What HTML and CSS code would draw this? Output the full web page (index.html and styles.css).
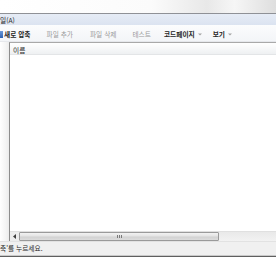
FILE: index.html
```html
<!DOCTYPE html>
<html lang="ko">
<head>
<meta charset="utf-8">
<link rel="stylesheet" href="styles.css">
</head>
<body>
<div class="window">
  <div class="titlebar"></div>
  <div class="menubar"><span class="menu-item">일(A)</span></div>
  <div class="toolbar">
    <span class="tb-icon"></span>
    <span class="tb-item strong">새로 압축</span>
    <span class="tb-item disabled">파일 추가</span>
    <span class="tb-item disabled">파일 삭제</span>
    <span class="tb-item disabled">테스트</span>
    <span class="tb-item strong">코드페이지<svg class="caret" width="4" height="3" viewBox="0 0 4 3"><path d="M0 0.5h4L2 2.5z" fill="#a4a4a4"/></svg></span>
    <span class="tb-item strong">보기<svg class="caret" width="4" height="3" viewBox="0 0 4 3"><path d="M0 0.5h4L2 2.5z" fill="#a4a4a4"/></svg></span>
  </div>
  <div class="main">
    <div class="side"></div>
    <div class="list">
      <div class="list-header"><span class="col">이름</span></div>
      <div class="list-body"></div>
      <div class="hscroll">
        <span class="arrow"><svg width="3" height="5" viewBox="0 0 3 5"><path d="M3 0v5L0 2.5z" fill="#3c3c3c"/></svg></span>
        <div class="thumb"><span class="grip"></span></div>
        <div class="track"></div>
      </div>
    </div>
  </div>
  <div class="statusbar"><span class="status-text">축'를 누르세요.</span></div>
  <div class="frame-bottom"></div>
</div>
</body>
</html>
```
FILE: styles.css
```css
* { box-sizing: border-box; }
html, body {
  margin: 0;
  padding: 0;
  width: 276px;
  height: 260px;
  overflow: hidden;
  background: #ffffff;
  font-family: "Noto Sans CJK KR", "Noto Sans", sans-serif;
  font-size: 6.7px;
  color: #1e1e1e;
}
.window {
  display: flex;
  flex-direction: column;
  height: 260px;
}
.titlebar {
  height: 14px;
  background: linear-gradient(90deg, #ffffff 0%, #fbfbfb 55%, #e8e8e8 75%, #f6f6f6 85%, #dedede 100%);
  border-bottom: 1px solid #8f9196;
}
.menubar {
  height: 11px;
  background: linear-gradient(180deg, #e6ecf6 0%, #dbe3f0 100%);
  display: flex;
  align-items: center;
  padding-top: 1px;
}
.menu-item {
  line-height: 10px;
}
.toolbar {
  height: 17px;
  background: linear-gradient(180deg, #fbfcfd 0%, #f3f5f8 100%);
  display: flex;
  align-items: center;
  padding-top: 2px;
  border-bottom: 1px solid #e6e8ec;
}
.tb-icon {
  width: 3px;
  height: 7px;
  background: linear-gradient(180deg, #6c9ad8, #2f62b4);
  margin-right: 1px;
}
.tb-item {
  line-height: 14px;
  white-space: nowrap;
  display: flex;
  align-items: center;
}
.tb-item.strong { font-weight: 700; color: #262626; }
.tb-item.disabled { color: #9a9a9a; }
.tb-item:nth-child(3) { margin-left: 16px; }
.tb-item:nth-child(4) { margin-left: 17px; }
.tb-item:nth-child(5) { margin-left: 16px; }
.tb-item:nth-child(6) { margin-left: 13px; }
.tb-item:nth-child(7) { margin-left: 11px; }
.caret {
  margin-left: 3px;
  margin-top: 1px;
}
.main {
  flex: 1;
  display: flex;
}
.side {
  width: 9px;
  background: linear-gradient(90deg, #ffffff 0%, #f5f5f5 60%, #ececec 100%);
}
.list {
  flex: 1;
  display: flex;
  flex-direction: column;
  border-left: 1px solid #8d8d8d;
  border-top: 1px solid #a9a9a9;
}
.list-header {
  height: 12px;
  background: linear-gradient(180deg, #ffffff 0%, #f7f8f9 50%, #eef0f2 100%);
  border-bottom: 1px solid #e3e5e7;
  display: flex;
  align-items: center;
  padding-top: 3px;
}
.col {
  padding-left: 3px;
  line-height: 8px;
}
.list-body {
  flex: 1;
  background: #ffffff;
}
.hscroll {
  height: 10px;
  display: flex;
  align-items: stretch;
  background: #ececec;
  border-top: 1px solid #e0e0e0;
}
.arrow {
  width: 9px;
  display: flex;
  align-items: center;
  justify-content: center;
}
.thumb {
  width: 200px;
  border: 1px solid #9a9a9a;
  border-radius: 1px;
  background: linear-gradient(180deg, #f2f2f2 0%, #e4e4e4 45%, #d2d2d2 55%, #dcdcdc 100%);
  display: flex;
  align-items: center;
  justify-content: center;
}
.grip {
  width: 5px;
  height: 3px;
  background: repeating-linear-gradient(90deg, #7a7a7a 0 1px, transparent 1px 2px);
}
.track {
  flex: 1;
  background: linear-gradient(180deg, #e9e9e9, #f2f2f2);
}
.statusbar {
  height: 15px;
  background: #f0f0f0;
  border-top: 1px solid #e2e2e2;
  border-bottom: 1px solid #c9c9c9;
  display: flex;
  align-items: center;
}
.status-text {
  line-height: 13px;
  color: #1e1e1e;
}
.frame-bottom {
  height: 4px;
  border-top: 1px solid #5f5f5f;
  background: #ffffff;
}
```
